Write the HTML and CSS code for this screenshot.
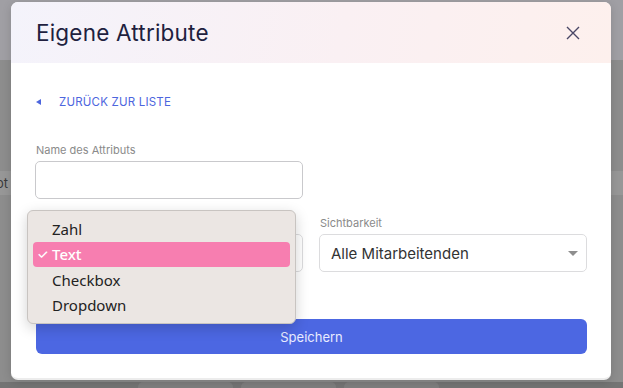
FILE: index.html
```html
<!DOCTYPE html>
<html lang="de">
<head>
<meta charset="utf-8">
<link rel="stylesheet" href="styles.css">
</head>
<body>
<div class="backdrop">
  <div class="bg-top"></div>
  <div class="bg-row"><span class="bg-text">ot</span></div>
  <div class="bg-pills"><span class="pill"></span><span class="pill"></span><span class="pill"></span></div>
</div>

<div class="modal">
  <div class="modal-header">
    <h1 class="modal-title">Eigene Attribute</h1>
    <button class="close" aria-label="Schließen">
      <svg width="16" height="16" viewBox="0 0 16 16"><path d="M2 2L14 14M14 2L2 14" stroke="#4a4766" stroke-width="1.4" fill="none"/></svg>
    </button>
  </div>
  <div class="modal-body">
    <a class="back" href="#"><span class="tri"></span><span>Zurück zur Liste</span></a>
    <div class="field">
      <label class="label">Name des Attributs</label>
      <div class="input"></div>
    </div>
    <div class="row">
      <div class="field">
        <label class="label">Typ</label>
        <div class="select"><span>Text</span><span class="caret"></span></div>
      </div>
      <div class="field">
        <label class="label">Sichtbarkeit</label>
        <div class="select"><span>Alle Mitarbeitenden</span><span class="caret"></span></div>
      </div>
    </div>
    <button class="save">Speichern</button>
  </div>
</div>

<div class="menu">
  <div class="item">Zahl</div>
  <div class="item selected"><span class="check">✓</span><span>Text</span></div>
  <div class="item">Checkbox</div>
  <div class="item">Dropdown</div>
</div>
</body>
</html>
```
FILE: styles.css
```css
* { box-sizing: border-box; }
html, body { margin: 0; padding: 0; }
body {
  width: 623px;
  height: 388px;
  overflow: hidden;
  background: #8d8d8d;
  font-family: Inter, "Noto Sans", sans-serif;
  position: relative;
}
.backdrop { display: flex; flex-direction: column; height: 388px; }
.bg-top { height: 60px; background: #a09fa4; }
.bg-row {
  margin-top: 111px;
  height: 24px;
  background: #979797;
  display: flex;
  align-items: center;
}
.bg-text { font-size: 13px; color: #3a3a3a; margin-left: -4px; }
.bg-pills { margin-top: auto; height: 6px; display: flex; gap: 8px; padding-left: 138px; background: #747474; }
.pill { width: 95px; height: 10px; border-radius: 5px; background: #7e7e7e; }

.modal {
  position: absolute;
  left: 11px;
  top: 2px;
  width: 600px;
  height: 378px;
  background: #fff;
  border-radius: 7px;
  overflow: hidden;
  border-bottom: 2px solid #ececec;
  box-shadow: 0 2px 10px rgba(0,0,0,0.15);
}
.modal-header {
  height: 61px;
  background: linear-gradient(100deg, #f4f3fb 0%, #faf0f3 55%, #fdf0ed 100%);
  display: flex;
  align-items: center;
  justify-content: space-between;
  padding: 0 30px 0 25px;
}
.modal-title {
  margin: 0;
  font-size: 22.5px;
  font-weight: 400;
  color: #211f3f;
  letter-spacing: 0.2px;
}
.close {
  border: 0;
  background: none;
  padding: 0;
  width: 16px;
  height: 16px;
  display: flex;
}
.modal-body {
  padding: 32px 24px 0 24px;
  display: flex;
  flex-direction: column;
}
.back {
  display: flex;
  align-items: center;
  gap: 18px;
  text-decoration: none;
  color: #4d66de;
  font-size: 11.5px;
  font-weight: 400;
  text-transform: uppercase;
  letter-spacing: 0.2px;
  height: 14px;
  margin-left: 1px;
}
.tri {
  width: 0; height: 0;
  border-top: 3.5px solid transparent;
  border-bottom: 3.5px solid transparent;
  border-right: 5px solid #4d66de;
}
.field { display: flex; flex-direction: column; flex: 1; }
.modal-body > .field { margin-top: 34px; width: 268px; }
.label {
  font-size: 11px;
  color: #8a8a8a;
  height: 14px;
  line-height: 14px;
  margin-bottom: 4px;
  margin-left: 1px;
}
.input {
  height: 38px;
  border: 1px solid #c9c9cc;
  border-radius: 5px;
}
.row { display: flex; gap: 16px; margin-top: 17px; }
.select {
  height: 38px;
  border: 1px solid #dcdcde;
  border-radius: 5px;
  display: flex;
  align-items: center;
  justify-content: space-between;
  padding: 0 8px 0 11px;
  font-size: 15px;
  color: #333;
}
.caret {
  width: 0; height: 0;
  border-left: 5px solid transparent;
  border-right: 5px solid transparent;
  border-top: 5px solid #8e8e8e;
}
.save {
  margin-top: 47px;
  margin-left: 1px;
  height: 35px;
  border: 0;
  border-radius: 6px;
  background: #4c67e2;
  color: #e8ebff;
  font-family: Inter, "Noto Sans", sans-serif;
  font-size: 13px;
}

.menu {
  position: absolute;
  left: 27px;
  top: 210px;
  width: 269px;
  height: 114px;
  background: #ebe6e3;
  border: 1px solid #c8c4c1;
  border-radius: 6px;
  box-shadow: 0 4px 14px rgba(0,0,0,0.18);
  padding: 5px 5px;
  font-family: "Noto Sans", Inter, sans-serif;
  display: flex;
  flex-direction: column;
}
.item {
  height: 25.5px;
  display: flex;
  align-items: center;
  gap: 4px;
  padding-left: 4px;
  font-size: 15px;
  color: #222;
  border-radius: 4px;
}
.item:not(.selected) { padding-left: 19px; }
.item.selected {
  background: #f77eb0;
  color: #fff;
  font-weight: 500;
}
.check { font-size: 13px; width: 11px; }
```
